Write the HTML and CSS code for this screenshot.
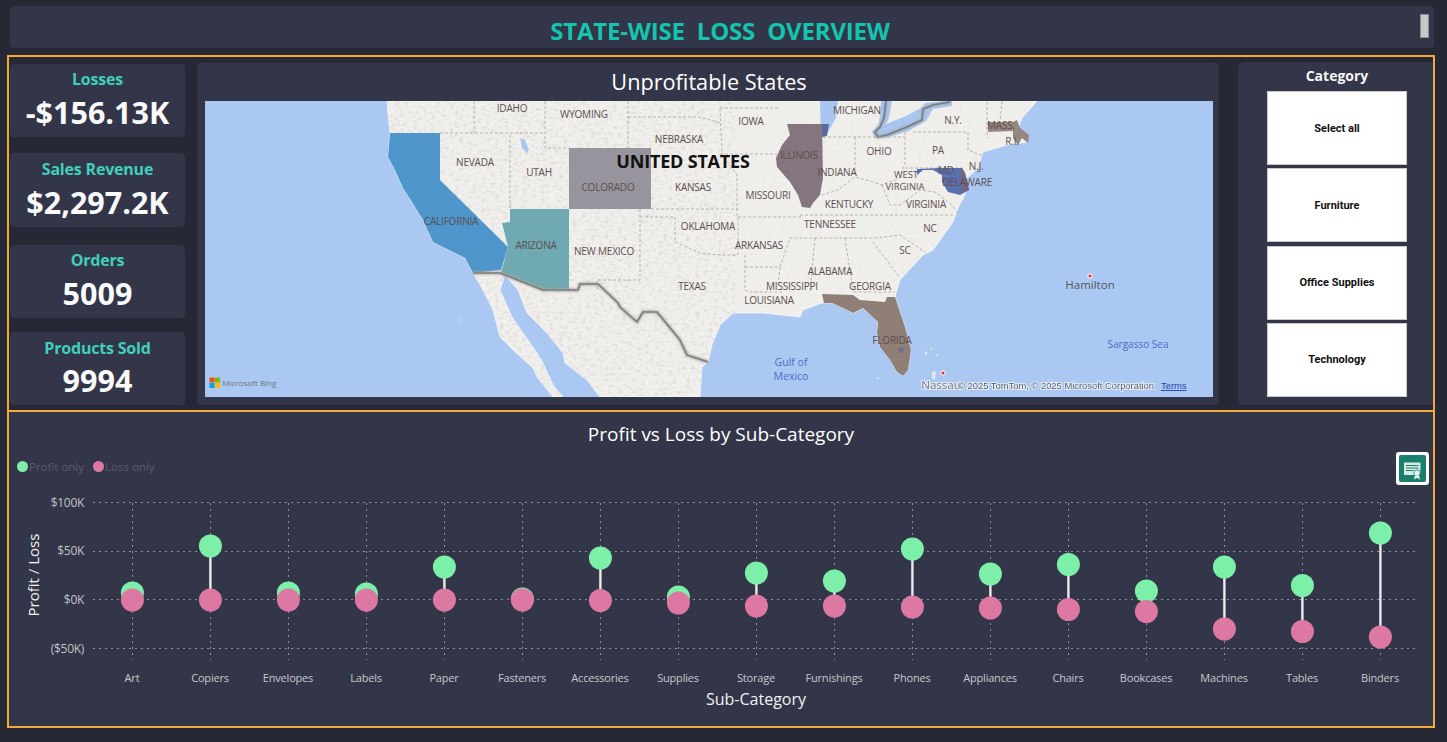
FILE: index.html
```html
<!DOCTYPE html>
<html lang="en">
<head>
<meta charset="utf-8">
<title>State-wise Loss Overview</title>
<link rel="stylesheet" href="styles.css">
</head>
<body>
<div class="page">
  <header class="header">
    <h1 class="header-title">STATE-WISE  LOSS  OVERVIEW</h1>
    <span class="header-thumb"></span>
  </header>

  <section class="frame frame-top">
    <div class="kpis">
      <div class="kpi"><div class="kpi-label">Losses</div><div class="kpi-value">-$156.13K</div></div>
      <div class="kpi kpi-b"><div class="kpi-label">Sales Revenue</div><div class="kpi-value">$2,297.2K</div></div>
      <div class="kpi kpi-c"><div class="kpi-label">Orders</div><div class="kpi-value">5009</div></div>
      <div class="kpi kpi-d"><div class="kpi-label">Products Sold</div><div class="kpi-value">9994</div></div>
    </div>

    <div class="map-card">
      <h2 class="map-title">Unprofitable States</h2>
      <svg class="map" viewBox="205 101 1008 296" width="1008" height="296" xmlns="http://www.w3.org/2000/svg">
        <defs>
          <clipPath id="land-clip"><path d="M387 101L1037 101L1022 118L1018 128L1028 142L1007 145L983 152L978 168L967 178L965 195L958 208L953 222L933 250L923 255L900 280L895 297L905 327L911 350L908 370L903 376L897 372L890 360L880 347L877 333L878 322L863 308L853 313L847 310L832 303L822 303L803 310L800 317L763 313L733 313L720 325L712 345L708 362L702 367L700 397L600 397L587 380L565 363L563 353L547 333L527 313L518 290L505 275L500 290L512 317L523 333L537 353L543 363L553 385L563 397L553 397L537 377L533 368L513 350L500 337L493 310L483 290L473 273L465 258L433 242L423 220L412 202L403 188L395 170L388 157L390 133L388 115Z"/></clipPath>
          <filter id="grain" x="0" y="0" width="100%" height="100%">
            <feTurbulence type="fractalNoise" baseFrequency="0.22 0.34" numOctaves="3" seed="4"/>
            <feColorMatrix type="matrix" values="0 0 0 0 0.45  0 0 0 0 0.44  0 0 0 0 0.42  0 0 0 3 -1.5"/>
          </filter>
          <filter id="soft"><feGaussianBlur stdDeviation="0.9"/></filter>
          <filter id="halo" x="-5%" y="-40%" width="110%" height="180%">
            <feMorphology in="SourceAlpha" operator="dilate" radius="1" result="d"/>
            <feFlood flood-color="#ffffff" flood-opacity="0.8"/>
            <feComposite in2="d" operator="in" result="w"/>
            <feMerge><feMergeNode in="w"/><feMergeNode in="SourceGraphic"/></feMerge>
          </filter>
        </defs>

        <rect class="sea" x="205" y="101" width="1008" height="296"/>
        <path class="land" d="M387 101L1037 101L1022 118L1018 128L1028 142L1007 145L983 152L978 168L967 178L965 195L958 208L953 222L933 250L923 255L900 280L895 297L905 327L911 350L908 370L903 376L897 372L890 360L880 347L877 333L878 322L863 308L853 313L847 310L832 303L822 303L803 310L800 317L763 313L733 313L720 325L712 345L708 362L702 367L700 397L600 397L587 380L565 363L563 353L547 333L527 313L518 290L505 275L500 290L512 317L523 333L537 353L543 363L553 385L563 397L553 397L537 377L533 368L513 350L500 337L493 310L483 290L473 273L465 258L433 242L423 220L412 202L403 188L395 170L388 157L390 133L388 115Z"/>
        <g clip-path="url(#land-clip)">
          <rect x="385" y="101" width="350" height="296" filter="url(#grain)" opacity="0.3"/>
          <rect x="735" y="101" width="300" height="210" filter="url(#grain)" opacity="0.07"/>
        </g>

        <!-- lakes and Canada border -->
        <path class="lake" d="M820 101L838 101L836 118L828 132L821 134Z"/>
        <path class="lake" d="M881 101L892 101L889 118L886 124L906 116L921 108L925 103L952 101L952 106L933 109L926 121L908 131L886 138L875 138L872 132L879 124Z"/>
        <path class="border-soft" d="M886 101L884 118L880 127L875 132L878 137L887 135L907 127L922 120L923 109L933 105L950 102" filter="url(#soft)"/>
        <path class="lake-dark" d="M886 101L884 118L880 127L875 132L878 137L887 135L907 127L922 120L923 109L933 105L950 102"/>
        <path class="lake-small" d="M520 138L525 140L529 150L527 153L522 148Z"/>

        <!-- state lines -->
        <g class="states">
          <path d="M474 101V133M440 133H545M545 101V148H569M628 101V148M628 117H700L720 123M510 135V209"/>
          <path d="M651 209H738M640 209V280H597V290M640 217H675V242L700 253L720 255L738 255V217M720 108H778M720 154H777"/>
          <path d="M720 108L722 154L737 175V217H802M745 267H780L790 238H877L900 235L925 252M800 215L953 215M745 255V267V290L750 292H782"/>
          <path d="M815 238L810 292M845 238L853 292H895M873 242L900 278M780 267L778 285"/>
          <path d="M823 137H905M855 137V177M905 132V162L900 178L882 185L870 181L855 177L838 190L822 195M913 132H968V150L983 156M905 168H962M987 102V138M1002 101L1000 122M882 185L890 205L900 205L920 190L935 192L952 205L958 213"/>
        </g>

        <!-- shaded states -->
        <path class="st-ca" d="M390 133H440V180L508 247L501 270L473 273L465 258L433 242L423 220L412 202L403 188L395 170L388 157Z"/>
        <path class="st-az" d="M510 209H569V290H543L501 273L508 247L502 223L510 222Z"/>
        <path class="st-co" d="M569 148H651V209H569Z"/>
        <path class="st-il" d="M787 124H822L823 178L820 195L813 203L810 208L802 207L798 195L790 182L777 167L776 158L782 145L790 135Z"/>
        <path class="st-in" d="M822 124H829L827 136L822 137Z"/>
        <path class="st-md" d="M917 169L940 168L962 168L965 173L969 190L960 195L948 192L942 182L942 175L933 170L923 170L917 175Z"/>
        <path class="st-de" d="M960 168L962 168L965 173L969 190L962 193Z"/>
        <path class="st-ma" d="M988 122H1013L1017 120L1020 128L1029 135L1028 143L1022 138L1018 145L1013 138L1013 131L988 132Z"/>
        <path class="st-fl" d="M822 294L853 295L860 300L885 302L887 297H895L905 327L911 350L908 370L903 376L897 372L890 360L880 347L877 333L878 322L863 308L853 313L847 310L832 303H824Z"/>
        <circle class="fl-spot" cx="901" cy="350" r="3"/>

        <!-- Mexico border -->
        <path class="border-soft" d="M473 273H500L543 290H578L580 284H598L618 303L620 307L637 322L643 312H657L680 340L687 355L708 362" filter="url(#soft)"/>
        <path class="border" d="M473 273H500L543 290H578L580 284H598L618 303L620 307L637 322L643 312H657L680 340L687 355L708 362"/>

        <!-- islands -->
        <g class="isle">
          <circle cx="926" cy="353" r="1.5"/><circle cx="931" cy="349" r="1"/><circle cx="937" cy="355" r="1"/>
          <path d="M932 372L936 371L935 380L932 378Z"/><circle cx="878" cy="378" r="1"/><circle cx="459" cy="320" r="1"/>
        </g>

        <!-- labels -->
        <g class="labels">
          <text x="512" y="112">IDAHO</text><text x="584" y="118">WYOMING</text><text x="679" y="143">NEBRASKA</text>
          <text x="475" y="166">NEVADA</text><text x="539" y="176">UTAH</text><text x="608" y="191">COLORADO</text>
          <text x="693" y="191">KANSAS</text><text x="451" y="225">CALIFORNIA</text><text x="536" y="249">ARIZONA</text>
          <text x="604" y="255">NEW MEXICO</text><text x="708" y="230">OKLAHOMA</text><text x="692" y="290">TEXAS</text>
          <text x="751" y="125">IOWA</text><text x="857" y="114">MICHIGAN</text><text x="799" y="159">ILLINOIS</text>
          <text x="879" y="155">OHIO</text><text x="938" y="154">PA</text><text x="953" y="124">N.Y.</text>
          <text x="1001" y="129">MASS.</text><text x="1012" y="145">R.I.</text><text x="976" y="170">N.J.</text>
          <text x="947" y="174">MD.</text><text x="967" y="186">DELAWARE</text>
          <text class="label-tight" x="906" y="178">WEST<tspan x="905" y="190">VIRGINIA</tspan></text>
          <text x="837" y="176">INDIANA</text><text x="768" y="199">MISSOURI</text>
          <text x="849" y="208">KENTUCKY</text><text x="926" y="208">VIRGINIA</text><text x="830" y="228">TENNESSEE</text>
          <text x="930" y="232">NC</text><text x="759" y="249">ARKANSAS</text><text x="905" y="254">SC</text>
          <text x="830" y="275">ALABAMA</text><text x="792" y="290">MISSISSIPPI</text><text x="870" y="290">GEORGIA</text>
          <text x="769" y="304">LOUISIANA</text><text x="892" y="344">FLORIDA</text>
        </g>
        <text class="country" x="683" y="168">UNITED STATES</text>
        <g class="sea-labels">
          <text x="791" y="366">Gulf of<tspan x="791" y="380">Mexico</tspan></text><text class="sargasso" x="1138" y="348">Sargasso Sea</text>
        </g>
        <circle class="city-halo" cx="1090" cy="276" r="2.6"/><circle class="city" cx="1090" cy="276" r="1.6"/>
        <text class="city-label" x="1090" y="289">Hamilton</text>
        <circle class="city-halo" cx="943" cy="373" r="2.6"/><circle class="city" cx="943" cy="373" r="1.6"/>
        <text class="city-label" x="941" y="389" filter="url(#halo)">Nassau</text>
        <text class="copyright" x="958" y="389" filter="url(#halo)">© 2025 TomTom, © 2025 Microsoft Corporation</text>
        <text class="terms" x="1161" y="389">Terms</text>

        <!-- Bing logo -->
        <rect class="ms-r" x="209.500" y="377.500" width="5" height="5"/><rect class="ms-g" x="215" y="377.500" width="5" height="5"/>
        <rect class="ms-b" x="209.500" y="383" width="5" height="5"/><rect class="ms-y" x="215" y="383" width="5" height="5"/>
        <text class="bing" x="222.500" y="386">Microsoft Bing</text>
      </svg>
    </div>

    <aside class="cat-card">
      <h2 class="cat-title">Category</h2>
      <div class="slicer">Select all</div>
      <div class="slicer">Furniture</div>
      <div class="slicer">Office Supplies</div>
      <div class="slicer">Technology</div>
    </aside>
  </section>

  <section class="frame frame-bottom">
    <h2 class="chart-title">Profit vs Loss by Sub-Category</h2>
    <div class="legend">
      <span class="legend-item"><i class="dot dot-profit"></i>Profit only</span>
      <span class="legend-item"><i class="dot dot-loss"></i>Loss only</span>
    </div>
    <button class="cert-btn" type="button" aria-label="Certificate">
      <svg viewBox="0 0 27 27" width="27" height="27" xmlns="http://www.w3.org/2000/svg">
        <rect class="cert-bg" width="27" height="27" rx="2"/>
        <path class="cert-doc" d="M5 7.500H21.500V17.500H17V20H5Z"/>
        <path class="cert-lines" d="M7 10.500H19.500M7 13H19.500M7 15.500H14.500"/>
        <circle class="cert-seal" cx="18" cy="18" r="3.200"/>
        <path class="cert-ribbon" d="M16 20.500L15 24.500L18 22.800L21 24.500L20 20.500"/>
      </svg>
    </button>
    <svg class="chart" viewBox="9 478 1424 248" width="1424" height="248" xmlns="http://www.w3.org/2000/svg">
      <g class="grid">
        <path d="M93 502.500H1419M93 551.500H1419M93 599.500H1419M93 648.500H1419"/>
        <path d="M132.500 503V660M210.500 503V660M288.500 503V660M366.500 503V660M444.500 503V660M522.500 503V660M600.500 503V660M678.500 503V660M756.500 503V660M834.500 503V660M912.500 503V660M990.500 503V660M1068.500 503V660M1146.500 503V660M1224.500 503V660M1302.500 503V660M1380.500 503V660"/>
      </g>
      <g class="y-labels">
        <text x="84" y="507">$100K</text><text x="84" y="555">$50K</text><text x="84" y="604">$0K</text><text x="84" y="653">($50K)</text>
      </g>
      <text class="y-title" transform="translate(39 575) rotate(-90)">Profit / Loss</text>
      <g class="conn">
        <path d="M210 546V600M444 567V600M600 558V600M756 573V606M834 581V606M912 549V607M990 574V608M1068 564.500V609.500M1146 591V611.500M1224 567V629M1302 585.500V631.500M1380 533V637"/>
      </g>
      <g class="profit">
        <circle cx="132" cy="593" r="11.500"/><circle cx="210" cy="546" r="11.500"/><circle cx="288" cy="593" r="11.500"/>
        <circle cx="366" cy="594" r="11.500"/><circle cx="444" cy="567" r="11.500"/><circle cx="522" cy="599" r="11.500"/>
        <circle cx="600" cy="558" r="11.500"/><circle cx="678" cy="597" r="11.500"/><circle cx="756" cy="573" r="11.500"/>
        <circle cx="834" cy="581" r="11.500"/><circle cx="912" cy="549" r="11.500"/><circle cx="990" cy="574" r="11.500"/>
        <circle cx="1068" cy="564.500" r="11.500"/><circle cx="1146" cy="591" r="11.500"/><circle cx="1224" cy="567" r="11.500"/>
        <circle cx="1302" cy="585.500" r="11.500"/><circle cx="1380" cy="533" r="11.500"/>
      </g>
      <g class="loss">
        <circle cx="132" cy="600" r="11.500"/><circle cx="210" cy="600" r="11.500"/><circle cx="288" cy="600" r="11.500"/>
        <circle cx="366" cy="600" r="11.500"/><circle cx="444" cy="600" r="11.500"/><circle cx="522" cy="600" r="11.500"/>
        <circle cx="600" cy="600.500" r="11.500"/><circle cx="678" cy="603" r="11.500"/><circle cx="756" cy="606" r="11.500"/>
        <circle cx="834" cy="606" r="11.500"/><circle cx="912" cy="607" r="11.500"/><circle cx="990" cy="608" r="11.500"/>
        <circle cx="1068" cy="609.500" r="11.500"/><circle cx="1146" cy="611.500" r="11.500"/><circle cx="1224" cy="629" r="11.500"/>
        <circle cx="1302" cy="631.500" r="11.500"/><circle cx="1380" cy="637" r="11.500"/>
      </g>
      <g class="x-labels">
        <text x="132" y="682">Art</text><text x="210" y="682">Copiers</text><text x="288" y="682">Envelopes</text>
        <text x="366" y="682">Labels</text><text x="444" y="682">Paper</text><text x="522" y="682">Fasteners</text>
        <text x="600" y="682">Accessories</text><text x="678" y="682">Supplies</text><text x="756" y="682">Storage</text>
        <text x="834" y="682">Furnishings</text><text x="912" y="682">Phones</text><text x="990" y="682">Appliances</text>
        <text x="1068" y="682">Chairs</text><text x="1146" y="682">Bookcases</text><text x="1224" y="682">Machines</text>
        <text x="1302" y="682">Tables</text><text x="1380" y="682">Binders</text>
      </g>
      <text class="x-title" x="756" y="705">Sub-Category</text>
    </svg>
  </section>
</div>
</body>
</html>
```
FILE: styles.css
```css
* { box-sizing: border-box; }
html, body { margin: 0; padding: 0; }
body {
  width: 1447px;
  height: 742px;
  overflow: hidden;
  background: #272835;
  font-family: "Open Sans", "Noto Sans", sans-serif;
  color: #fff;
}
.page { display: flex; flex-direction: column; padding-top: 6px; }

.header {
  display: flex;
  align-items: center;
  height: 42px;
  margin: 0 13px 0 10px;
  padding: 8px 5px 10px 0;
  background: #333548;
  border-radius: 4px;
}
.header-title {
  flex: 1;
  margin: 0 0 -8px 10px;
  text-align: center;
  white-space: pre;
  font-size: 24px;
  font-weight: 700;
  letter-spacing: -0.2px;
  color: #13c4ae;
}
.header-thumb {
  width: 9px;
  height: 24px;
  background: #c8c8c8;
  border: 1px solid #8d8e94;
}

.frame { border: 2px solid #f2ab3a; margin-left: 7px; margin-right: 12px; }
.frame-top {
  display: flex;
  height: 357px;
  margin-top: 7px;
  padding: 6px 0 5px 1px;
  border-bottom: 0;
}

.kpis { display: flex; flex-direction: column; width: 175px; margin-right: 12px; padding-top: 1px; }
.kpi {
  display: flex;
  flex-direction: column;
  align-items: center;
  height: 73px;
  background: #333548;
  border-radius: 4px;
}
.kpi-b { margin-top: 16px; height: 74px; padding-top: 1px; }
.kpi-c { margin-top: 18px; }
.kpi-d { margin-top: 14px; padding-top: 1px; }
.kpi-label {
  margin-top: 4px;
  font-size: 16px;
  line-height: 22px;
  font-weight: 700;
  letter-spacing: -0.2px;
  color: #3fd0bb;
}
.kpi-value {
  margin-top: 2px;
  font-size: 30.500px;
  line-height: 40px;
  font-weight: 700;
  color: #fafafa;
}
.kpi-d .kpi-value { margin-top: 1px; }

.map-card {
  width: 1022px;
  height: 342px;
  margin-right: 19px;
  padding: 0 6px 0 8px;
  background: #333548;
  border-radius: 4px;
}
.map-title {
  margin: 0;
  height: 38px;
  padding-top: 4px;
  text-align: center;
  font-size: 21.700px;
  line-height: 30px;
  font-weight: 400;
  color: #fff;
}
.map { display: block; }
.sea { fill: #abc8f2; }
.land { fill: #f0efec; stroke: #fff; stroke-width: 0.6; stroke-linejoin: round; }
.lake { fill: #a9c6f0; }
.lake-small { fill: #a9c6f0; }
.lake-dark { fill: none; stroke: #6f7f88; stroke-width: 1.6; }
.states { fill: none; stroke: #b5b3ae; stroke-width: 1; stroke-dasharray: 3 2; }
.st-ca { fill: #4490c9; opacity: 0.95; }
.st-az { fill: #6fa9b1; }
.st-co { fill: #97949d; }
.st-il { fill: #84757e; }
.st-in { fill: #5a6a9f; }
.st-md { fill: #5a6fae; }
.st-de { fill: #6f6785; }
.st-ma { fill: #95867f; }
.st-fl { fill: #8f7f77; }
.fl-spot { fill: #6f7388; }
.border { fill: none; stroke: #807f7c; stroke-width: 1.6; stroke-linejoin: round; }
.border-soft { fill: none; stroke: #a8a7a3; stroke-width: 3; }
.isle { fill: #e4e8ee; }
.labels text {
  font-family: "Open Sans", sans-serif;
  font-size: 10px;
  letter-spacing: -0.2px;
  fill: #5e4e4e;
  text-anchor: middle;
}
.labels .label-tight { font-size: 9.400px; letter-spacing: 0; }
.country {
  font-family: "Open Sans", sans-serif;
  font-size: 18px;
  font-weight: 700;
  letter-spacing: -0.2px;
  fill: #111;
  text-anchor: middle;
}
.sea-labels text {
  font-family: "Open Sans", sans-serif;
  font-size: 10.500px;
  fill: #4a6cc8;
  text-anchor: middle;
}
.sea-labels .sargasso { font-size: 10px; }
.city { fill: #e8362a; }
.city-halo { fill: #fff; opacity: 0.8; }
.city-label {
  font-family: "Open Sans", sans-serif;
  font-size: 11.500px;
  fill: #55555c;
  text-anchor: middle;
}
.copyright { font-family: "Liberation Sans", sans-serif; font-size: 9.400px; fill: #111; }
.terms { font-family: "Liberation Sans", sans-serif; font-size: 9.400px; fill: #2a47a8; text-decoration: underline; }
.ms-r { fill: #f25022; }
.ms-g { fill: #7fba00; }
.ms-b { fill: #00a4ef; }
.ms-y { fill: #ffb900; }
.bing { font-family: "Open Sans", sans-serif; font-size: 8px; fill: #6f7276; }

.cat-card {
  display: flex;
  flex-direction: column;
  align-items: center;
  width: 195px;
  height: 343px;
  margin-top: -1px;
  padding-left: 3px;
  background: #333548;
  border-radius: 6px 0 0 6px;
}
.cat-title {
  flex: none;
  margin: 0;
  height: 29px;
  padding-top: 4px;
  font-size: 14px;
  line-height: 20px;
  font-weight: 700;
  color: #f5f5f5;
}
.slicer {
  display: flex;
  flex: none;
  align-items: center;
  justify-content: center;
  width: 140px;
  height: 74px;
  margin-bottom: 3.300px;
  background: #fff;
  border: 1px solid #c9c9cc;
  font-family: Roboto, sans-serif;
  font-size: 11px;
  font-weight: 700;
  color: #111;
}

.frame-bottom {
  position: relative;
  height: 318px;
  margin-top: -2px;
  background: #333548;
  background-clip: padding-box;
}
.chart-title {
  margin: 0;
  height: 44px;
  padding-top: 9px;
  text-align: center;
  font-size: 19px;
  line-height: 26px;
  font-weight: 400;
  color: #fff;
}
.legend { display: flex; height: 22px; padding-left: 8px; padding-top: 2px; margin-bottom: 0; gap: 9px; }
.legend-item {
  display: flex;
  align-items: center;
  gap: 1px;
  height: 16px;
  font-size: 11.500px;
  color: #5c5d68;
}
.dot { display: inline-block; width: 11px; height: 11px; border-radius: 50%; }
.dot-profit { background: #7cefa8; }
.dot-loss { background: #dd78a3; }
.cert-btn {
  position: absolute;
  top: 40px;
  right: 4px;
  width: 33px;
  height: 33px;
  padding: 3px;
  border: 0;
  border-radius: 3px;
  background: #fff;
}
.cert-btn svg { display: block; }
.cert-bg { fill: #1a7f6c; }
.cert-doc { fill: #d6ebe5; }
.cert-lines { fill: none; stroke: #1a7f6c; stroke-width: 1; }
.cert-seal { fill: #eaf5f2; stroke: #1a7f6c; stroke-width: 0.8; }
.cert-ribbon { fill: #eaf5f2; }

.chart { display: block; }
.grid { fill: none; stroke: #8f909b; stroke-width: 1; stroke-dasharray: 2 4; }
.conn { fill: none; stroke: #ececec; stroke-width: 2.400; transform: translateX(0.4px); }
.profit { fill: #7cefa8; transform: translateX(0.4px); }
.loss { fill: #dd78a3; transform: translateX(0.4px); }
.y-labels text {
  font-family: "Open Sans", sans-serif;
  font-size: 12px;
  letter-spacing: -0.3px;
  fill: #c2c2c6;
  text-anchor: end;
}
.x-labels text {
  font-family: "Open Sans", sans-serif;
  font-size: 11px;
  letter-spacing: -0.2px;
  fill: #c8c8cc;
  text-anchor: middle;
}
.y-title {
  font-family: "Open Sans", sans-serif;
  font-size: 15px;
  fill: #f2f2f2;
  text-anchor: middle;
}
.x-title {
  font-family: "Open Sans", sans-serif;
  font-size: 16px;
  fill: #f2f2f2;
  text-anchor: middle;
}
```
